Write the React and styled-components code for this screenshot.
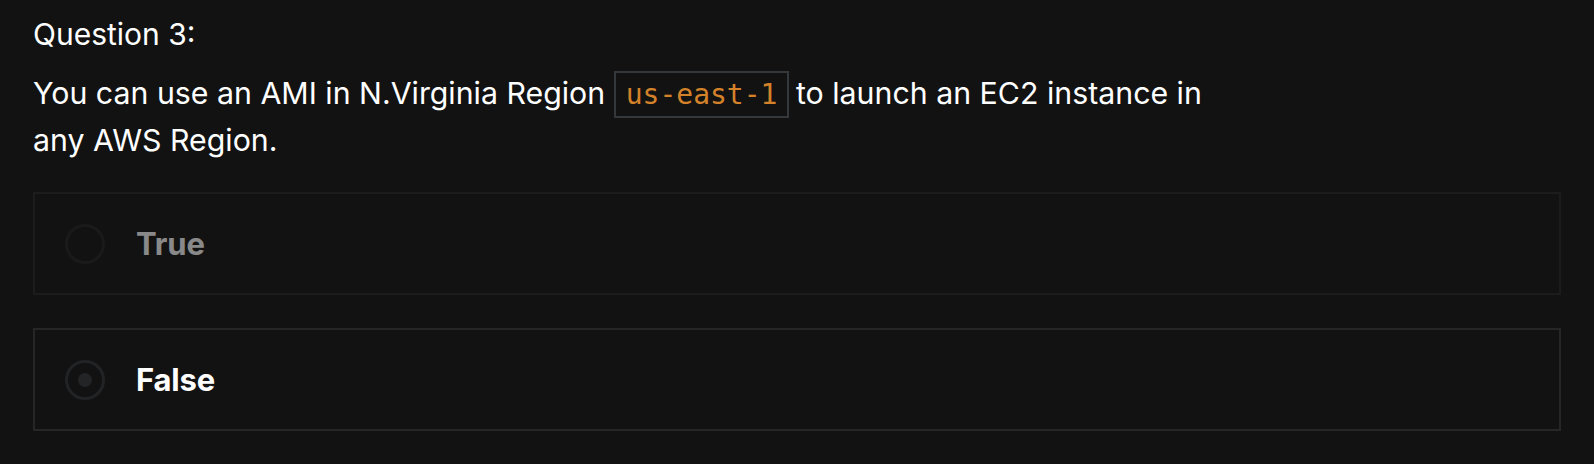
import React, { useState } from "react";
import styled, { createGlobalStyle } from "styled-components";

const GlobalStyle = createGlobalStyle`
  html, body {
    margin: 0;
    background: #121212;
  }
  body {
    font-family: "Inter", "Noto Sans", sans-serif;
    color: #ffffff;
  }
`;

const Page = styled.div`
  padding: 12px 33px 33px;
`;

const Title = styled.div`
  font-size: 30px;
  line-height: 45px;
  font-weight: 400;
`;

const Prompt = styled.p`
  margin: 14px 0 0;
  max-width: 1180px;
  font-size: 30.3px;
  line-height: 45px;
`;

const Code = styled.code`
  display: inline-block;
  margin: 0 -2px 0 0;
  padding: 5px 10px;
  border: 2px solid #35383b;
  font-family: "DejaVu Sans Mono", "Liberation Mono", monospace;
  font-size: 28px;
  line-height: normal;
  color: #d4822a;
`;

const Options = styled.div`
  display: flex;
  flex-direction: column;
  gap: 33px;
  margin-top: 29px;
`;

const Option = styled.label`
  display: flex;
  align-items: center;
  gap: 31px;
  height: 103px;
  box-sizing: border-box;
  padding: 0 30px;
  border: 2px solid #262626;
  opacity: ${(p) => (p.$dim ? 0.5 : 1)};
  cursor: pointer;
`;

const Radio = styled.span`
  display: flex;
  align-items: center;
  justify-content: center;
  width: 40px;
  height: 40px;
  box-sizing: border-box;
  border-radius: 50%;
  border: 3px solid #222325;
  flex-shrink: 0;

  &::after {
    content: "";
    width: 14px;
    height: 14px;
    border-radius: 50%;
    background: ${(p) => (p.$checked ? "#222426" : "transparent")};
  }
`;

const Label = styled.span`
  font-size: 31px;
  font-weight: 700;
  letter-spacing: -0.005em;
  color: #ffffff;
`;

const choices = ["True", "False"];

const App = () => {
  const [selected, setSelected] = useState("False");

  return (
    <Page>
      <GlobalStyle />
      <Title>Question 3:</Title>
      <Prompt>
        You can use an AMI in N.Virginia Region <Code>us-east-1</Code> to
        launch an EC2 instance in any AWS Region.
      </Prompt>
      <Options>
        {choices.map((c) => (
          <Option
            key={c}
            $dim={selected !== c}
            onClick={() => setSelected(c)}
          >
            <Radio $checked={selected === c} />
            <Label>{c}</Label>
          </Option>
        ))}
      </Options>
    </Page>
  );
};

export default App;
